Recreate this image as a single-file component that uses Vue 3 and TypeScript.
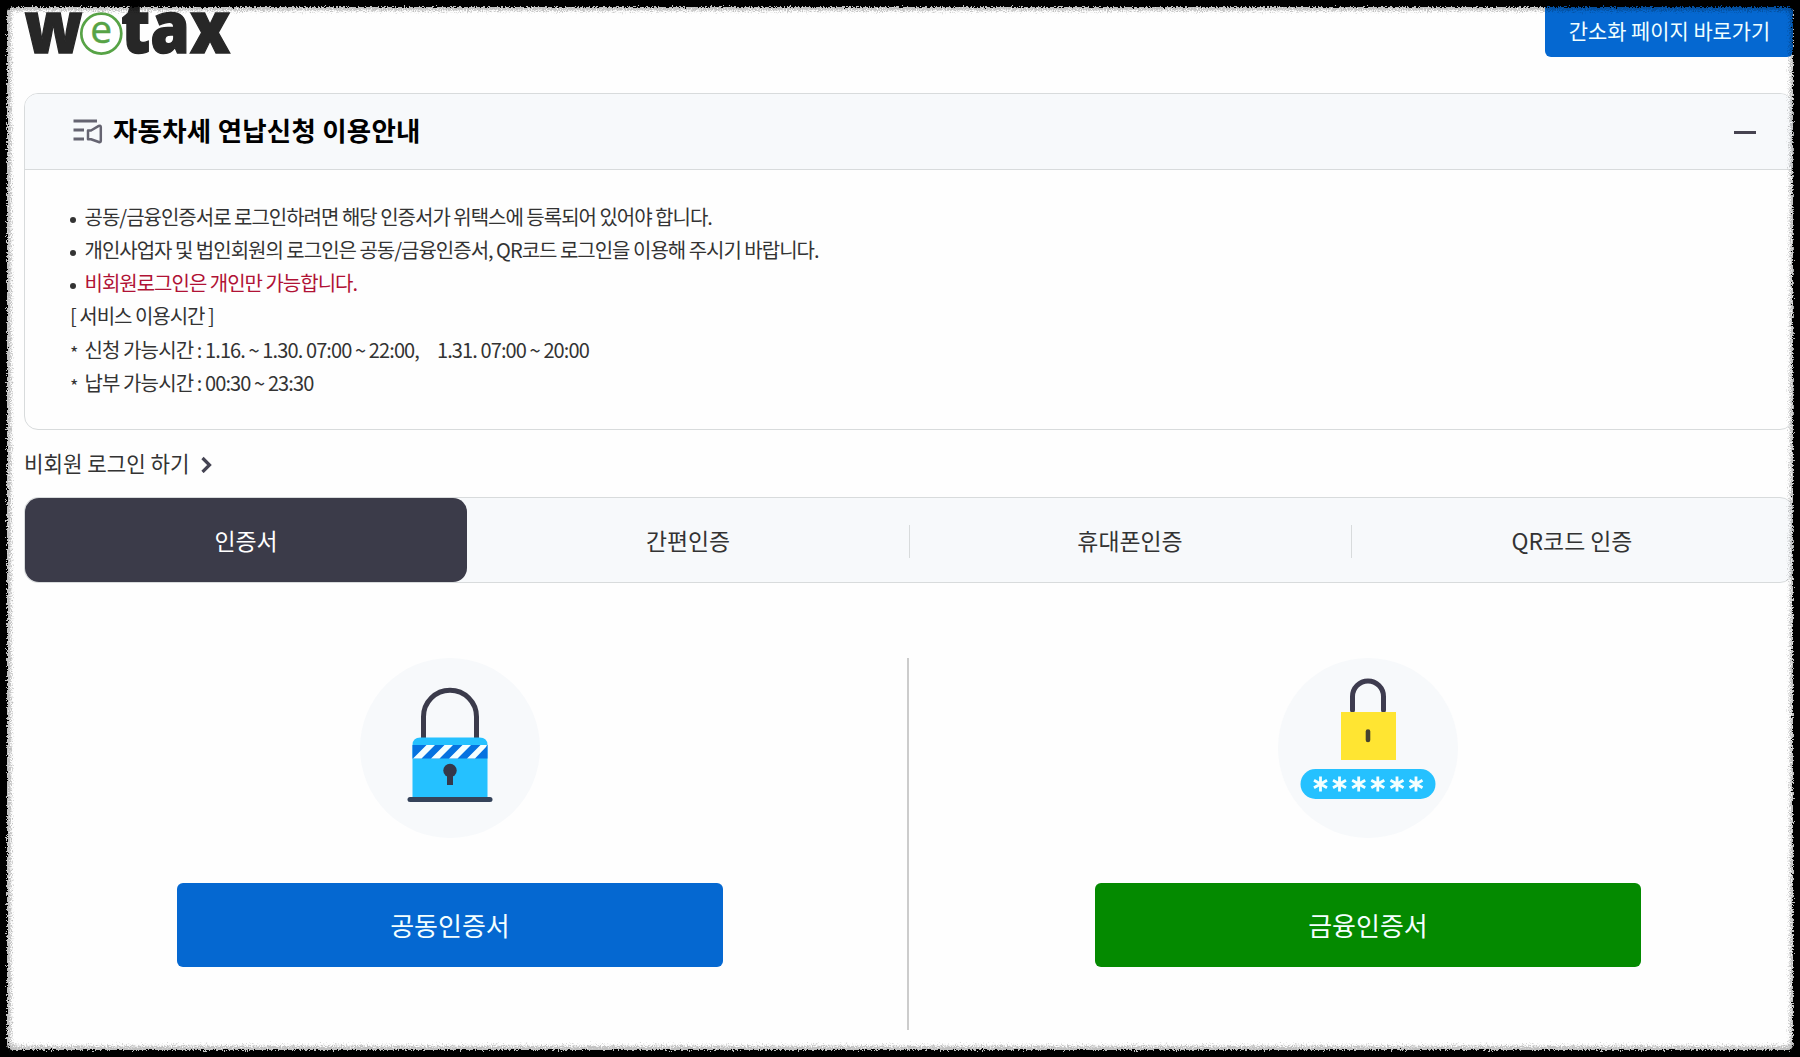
<script setup lang="ts">
import { ref } from 'vue'

interface Notice {
  mark: 'dot' | 'star' | 'none'
  text: string
  tone?: 'accent' | 'loose'
}

const notices: Notice[] = [
  { mark: 'dot', text: '공동/금융인증서로 로그인하려면 해당 인증서가 위택스에 등록되어 있어야 합니다.' },
  { mark: 'dot', text: '개인사업자 및 법인회원의 로그인은 공동/금융인증서, QR코드 로그인을 이용해 주시기 바랍니다.' },
  { mark: 'dot', text: '비회원로그인은 개인만 가능합니다.', tone: 'accent' },
  { mark: 'none', text: '[ 서비스 이용시간 ]' },
  { mark: 'star', text: '신청 가능시간 : 1.16. ~ 1.30. 07:00 ~ 22:00,\u00a0\u00a0\u00a0\u00a0 1.31. 07:00 ~ 20:00', tone: 'loose' },
  { mark: 'star', text: '납부 가능시간 : 00:30 ~ 23:30', tone: 'loose' },
]

const tabs: string[] = ['인증서', '간편인증', '휴대폰인증', 'QR코드 인증']
const active = ref(0)
const opened = ref(true)
const stars: number[] = [42.5, 61.5, 80.7, 99.8, 119, 138]
</script>

<template>
  <div class="page">
    <header class="top">
      <svg class="logo" width="210" height="60" viewBox="0 0 210 60" aria-label="wetax">
        <g class="logo-bold">
          <text x="0.500" y="53.300" textLength="58" lengthAdjust="spacingAndGlyphs">w</text>
          <text x="97" y="53.300" textLength="109" lengthAdjust="spacingAndGlyphs">tax</text>
        </g>
        <circle cx="77.3" cy="33.6" r="20" fill="#fff" stroke="#57a346" stroke-width="2.7" />
        <text class="logo-e" x="77.3" y="42.700" text-anchor="middle">e</text>
      </svg>
      <button class="shortcut">간소화 페이지 바로가기</button>
    </header>

    <section class="guide">
      <div class="guide-head">
        <svg class="guide-icon" width="30" height="26" viewBox="0 0 30 26" fill="none" stroke="#656471" stroke-width="2.9">
          <path d="M.5 2.000H24M.5 11.000H11M.5 20.000H11" />
          <path d="M15 11.500H18L25.800 6.900Q27.800 6 27.800 8.100V21.700Q27.800 23.800 25.800 23L18 20.200H15Z" stroke-width="2.500" stroke-linejoin="round" />
        </svg>
        <h2>자동차세 연납신청 이용안내</h2>
        <button class="fold" aria-label="접기" @click="opened = !opened"><i></i></button>
      </div>
      <ul v-if="opened" class="notices">
        <li v-for="n in notices" :key="n.text" :class="n.tone">
          <span v-if="n.mark !== 'none'" class="mark" :class="n.mark">{{ n.mark === 'star' ? '*' : '' }}</span>
          <span>{{ n.text }}</span>
        </li>
      </ul>
    </section>

    <a class="guest">
      <span>비회원 로그인 하기</span>
      <svg width="12" height="18" viewBox="0 0 12 18" fill="none" stroke="#454453" stroke-width="3.2">
        <path d="M1.500 3 8.500 10 1.500 17" />
      </svg>
    </a>

    <nav class="tabs">
      <button v-for="(t, i) in tabs" :key="t" class="tab" :class="{ on: active === i }" @click="active = i">{{ t }}</button>
    </nav>

    <main class="methods">
      <div class="method">
        <svg width="180" height="180" viewBox="0 0 180 180">
          <circle cx="90" cy="90" r="90" fill="#f7f9fb" />
          <path d="M63.5 82V58.700a26.5 26.5 0 0 1 53 0V82" fill="none" stroke="#3b3b4b" stroke-width="5" />
          <path d="M52.5 141V87q0-7.5 8-7.5h59q8 0 8 7.5v54z" fill="#25c1ff" />
          <path d="M52.5 87h75v13.500h-75z" fill="#0572e0" />
          <path d="M53 100.500 66.500 87h8.500L61.500 100.500zM71 100.500 84.500 87H93L79.500 100.500zM89 100.500 102.500 87h8.500L97.500 100.500zM107 100.500 120.500 87h6.500l-1 2L115 100.500z" fill="#f5ffff" />
          <circle cx="90" cy="112.500" r="6.700" fill="#34384a" />
          <path d="M87 113h6v14h-6z" fill="#34384a" />
          <path d="M50 141.500h80" stroke="#35435a" stroke-width="5" stroke-linecap="round" />
        </svg>
        <button class="cert blue">공동인증서</button>
      </div>
      <div class="divider"></div>
      <div class="method">
        <svg width="180" height="180" viewBox="0 0 180 180">
          <circle cx="90" cy="90" r="90" fill="#f7f9fb" />
          <path d="M74.500 52V38.500a15.500 15.500 0 0 1 31 0V52" fill="none" stroke="#3e3c4f" stroke-width="5" stroke-linecap="round" />
          <path d="M63 54h55v48H63z" fill="#ffe532" />
          <path d="M90 73.500v8.500" stroke="#46432f" stroke-width="4.600" stroke-linecap="round" />
          <rect x="22.500" y="111" width="135" height="30" rx="15" fill="#25c1ff" />
          <g stroke="#f4ffff" stroke-width="2.800">
            <path v-for="x in stars" :key="x" :d="`M${x} 118.500v15M${x - 6.500} 122.300l13 7.500M${x - 6.500} 129.800l13-7.500`" />
          </g>
        </svg>
        <button class="cert green">금융인증서</button>
      </div>
    </main>

    <!-- torn dark frame drawn over the page edge -->
    <svg class="frame" width="1800" height="1057" viewBox="0 0 1800 1057" aria-hidden="true">
      <defs>
        <filter id="rough" filterUnits="userSpaceOnUse" x="0" y="0" width="1800" height="1057" color-interpolation-filters="sRGB">
          <feTurbulence type="fractalNoise" baseFrequency="0.55" numOctaves="2" seed="4" result="n" />
          <feDisplacementMap in="SourceGraphic" in2="n" scale="6" xChannelSelector="R" yChannelSelector="G" />
        </filter>
        <filter id="haze" filterUnits="userSpaceOnUse" x="0" y="0" width="1800" height="1057" color-interpolation-filters="sRGB">
          <feGaussianBlur in="SourceGraphic" stdDeviation="1.2" result="b" />
          <feTurbulence type="fractalNoise" baseFrequency="0.8" numOctaves="2" seed="9" result="n" />
          <feDisplacementMap in="b" in2="n" scale="11" xChannelSelector="R" yChannelSelector="G" />
        </filter>
      </defs>
      <path filter="url(#haze)" opacity=".24" fill-rule="evenodd" d="M-20-20H1820V1077H-20zM17 10.500H1784Q1790 10.500 1790 16V1040Q1790 1046 1784 1046H17Q11 1046 11 1040V16Q11 10.500 17 10.500z" />
      <path filter="url(#rough)" fill-rule="evenodd" d="M-20-20H1820V1077H-20zM14 7H1787Q1793 7 1793 13V1044Q1793 1050 1787 1050H14Q7 1050 7 1044V13Q7 7 14 7z" />
      <path fill="none" stroke="#000" stroke-width="9" d="M0 0H1800V1057H0z" />
    </svg>
  </div>
</template>

<style>
html,
body {
  margin: 0;
  overflow: hidden;
  background: #fff;
}
</style>

<style scoped>
.page {
  position: relative;
  box-sizing: border-box;
  width: 1800px;
  height: 1057px;
  padding: 0 6px 0 24px;
  overflow: hidden;
  display: flex;
  flex-direction: column;
  background: #fefefe;
  color: #333;
  font-family: 'Noto Sans CJK KR', 'Noto Sans', sans-serif;
}
button {
  border: 0;
  padding: 0;
  margin: 0;
  font: inherit;
  color: inherit;
  background: none;
}
.top {
  display: flex;
  justify-content: space-between;
  align-items: flex-start;
  height: 93px;
  flex: none;
}
.logo-bold {
  font: 800 72px 'Open Sans', sans-serif;
  fill: #272727;
  stroke: #272727;
  stroke-width: 1.4px;
}
.logo-e {
  font: 400 39px 'Open Sans', sans-serif;
  fill: #57a346;
  stroke: #57a346;
  stroke-width: 0.4px;
}
.shortcut {
  width: 248px;
  height: 57px;
  margin-right: 1px;
  padding: 2px 0 0 1px;
  border-radius: 6px;
  background: #0568d1;
  color: #f0ffff;
  font-size: 20.900px;
}
.guide {
  box-sizing: border-box;
  height: 337px;
  flex: none;
  border: 1px solid #d8dbdc;
  border-radius: 14px;
  overflow: hidden;
}
.guide-head {
  box-sizing: border-box;
  display: flex;
  align-items: center;
  height: 76px;
  padding: 0 37px 0 48px;
  border-bottom: 1px solid #d8dbdc;
  background: #f7f9fb;
}
h2 {
  margin: -4px 0 0 10px;
  font-size: 26.500px;
  font-weight: 700;
  letter-spacing: 0.220px;
  line-height: 38px;
  color: #000;
}
.fold {
  margin: 1px 0 0 auto;
  padding: 12px 0;
}
.fold i {
  display: block;
  width: 22px;
  height: 3px;
  background: #464350;
}
.notices {
  list-style: none;
  margin: 0;
  padding: 30px 0 0 45px;
  font-size: 20px;
  letter-spacing: -1px;
}
.notices li {
  display: flex;
  height: 33.200px;
  line-height: 33.200px;
  white-space: pre;
}
.notices li:nth-child(4) {
  margin: -1px 0 1px;
}
.mark {
  width: 14.500px;
  flex: none;
}
.mark.dot::before {
  content: '';
  display: block;
  width: 6px;
  height: 6px;
  margin-top: 17px;
  border-radius: 50%;
  background: #333;
}
.mark.star {
  font-size: 18px;
  padding-top: 3px;
}
.notices .accent {
  color: #b01235;
}
.loose {
  letter-spacing: -0.890px;
}
.guest {
  display: flex;
  align-items: center;
  gap: 12px;
  height: 67px;
  flex: none;
  font-size: 21.200px;
}
.guest span {
  margin-top: -3px;
}
.tabs {
  box-sizing: border-box;
  display: flex;
  height: 86px;
  flex: none;
  border: 1px solid #d8dbdc;
  border-radius: 14px;
  background: #f7f9fb;
  font-size: 22.900px;
}
.tab {
  flex: 1;
  display: flex;
  align-items: center;
  justify-content: center;
}
.tab:nth-child(3),
.tab:nth-child(4) {
  background: linear-gradient(#d8dbdc, #d8dbdc) left 27px / 1px 33px no-repeat;
}
.tab.on {
  border-radius: 14px;
  background: #3b3b49;
  color: #fff;
}
.methods {
  display: flex;
  height: 372px;
  margin-top: 75px;
  padding: 0 153px;
}
.method {
  display: flex;
  flex-direction: column;
  align-items: center;
  gap: 45px;
  width: 546px;
  flex: none;
}
.divider {
  width: 2px;
  margin: 0 186px 0 184px;
  flex: none;
  background: #ccc;
}
.cert {
  width: 546px;
  height: 84px;
  padding-bottom: 2px;
  border-radius: 6px;
  font-size: 26px;
  color: #f4ffff;
}
.blue {
  background: #0568d1;
}
.green {
  background: #048a00;
}
.frame {
  position: absolute;
  inset: 0;
  pointer-events: none;
}
</style>
